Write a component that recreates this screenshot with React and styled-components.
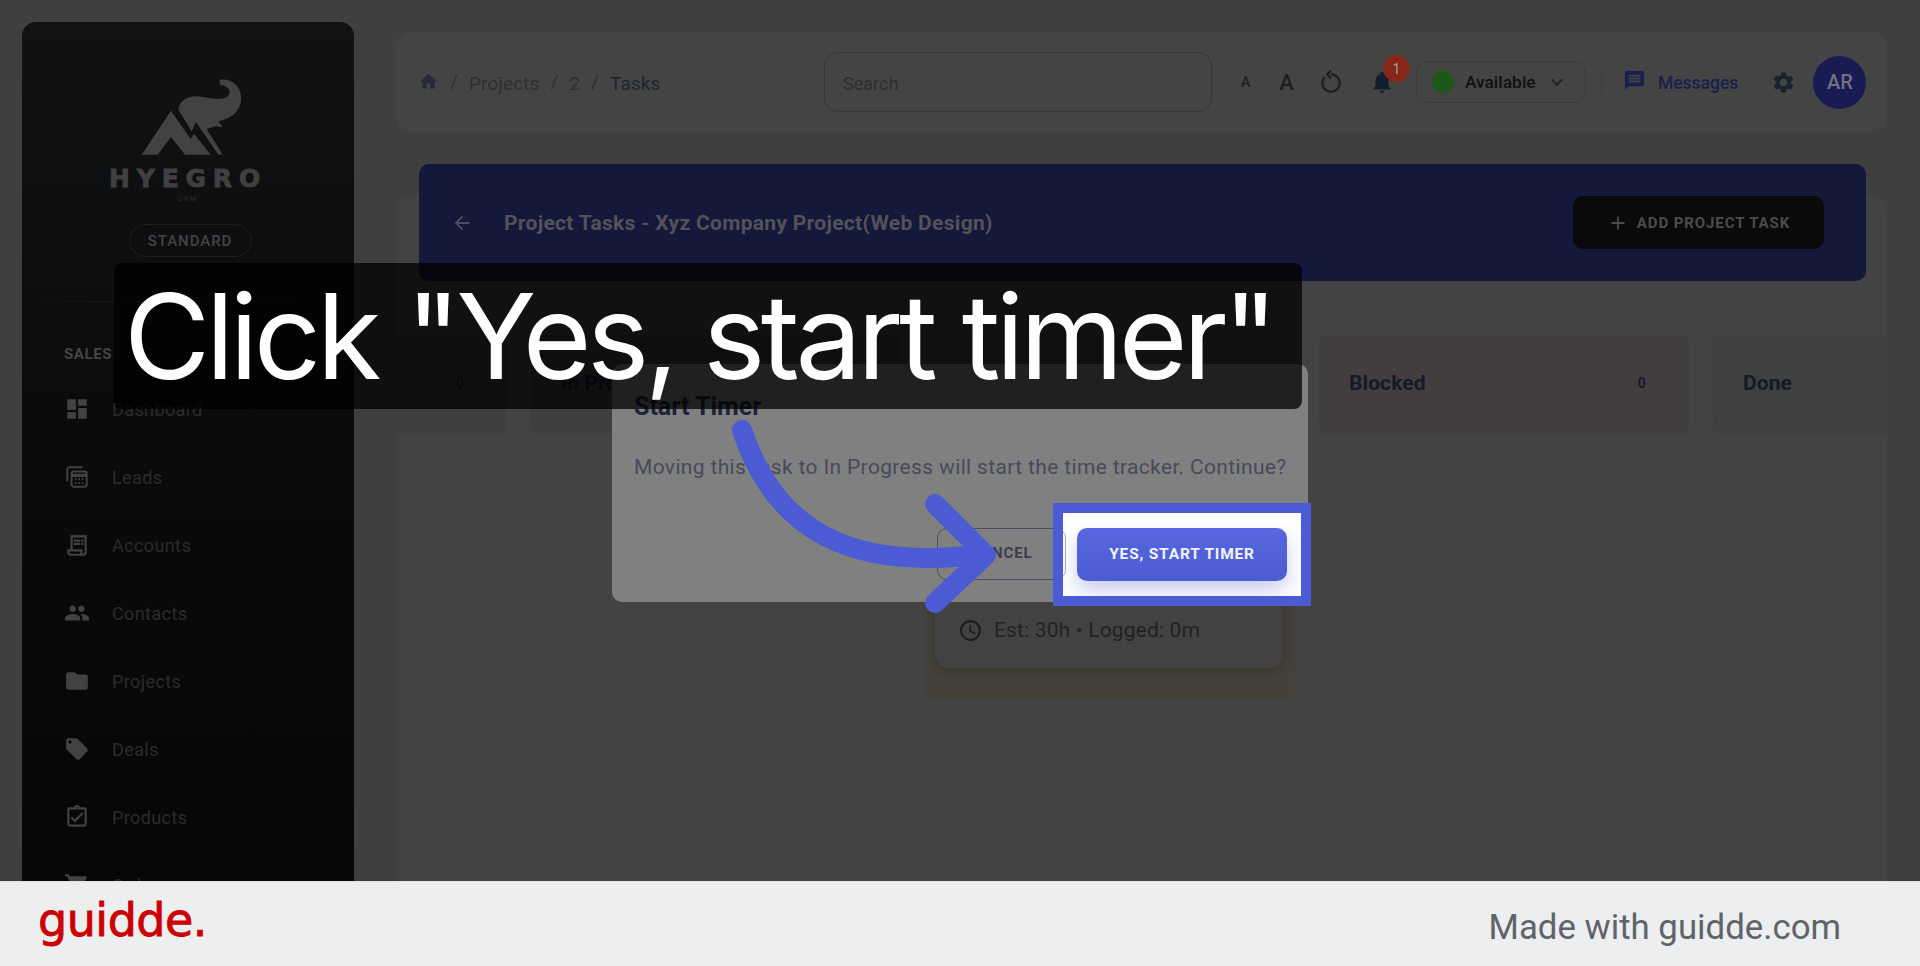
import styled, { createGlobalStyle } from 'styled-components';
import {
    MdAdd, MdAccessTime, MdArrowBack, MdDashboard, MdFolder, MdHome, MdKeyboardArrowDown,
    MdLocalOffer, MdMessage, MdNotifications, MdOutlineAssignmentTurnedIn,
    MdOutlineReceiptLong, MdPeople, MdSettings, MdShoppingCart,
} from 'react-icons/md';

const GlobalStyle = createGlobalStyle`
    html, body { margin: 0; padding: 0; height: 100%; overflow: hidden; background: #3f3f3f; }
    * { box-sizing: border-box; }
    body { font-family: Roboto, "Liberation Sans", sans-serif; }
`;

const Stage = styled.div`
    position: relative;
    height: 881px;
    overflow: hidden;
    display: flex;
    align-items: flex-start;
    padding: 22px 0 0 22px;
    background: #3f3f3f;
`;

/* sidebar */
const Sidebar = styled.aside`
    flex: none;
    width: 332px;
    height: 900px;
    border-radius: 14px;
    background: linear-gradient(180deg, #111214 0%, #0a0a0b 50%, #060606 100%);
    display: flex;
    flex-direction: column;
    align-items: center;
    padding-top: 56px;
`;

const LogoMark = styled.svg`
    width: 104px;
    height: 79px;
    margin-left: 7px;
    fill: #424242;
`;

const LogoName = styled.div`
    margin-top: 7px;
    font: 700 25px/29px "DejaVu Sans", sans-serif;
    letter-spacing: 6.8px;
    color: #404040;
    -webkit-text-stroke: 0.8px #404040;
`;

const LogoSub = styled.div`
    margin-top: 2px;
    font-size: 7px;
    line-height: 9px;
    letter-spacing: 2px;
    color: #2c2c2c;
`;

const PlanPill = styled.div`
    margin: 20px 0 0 4px;
    width: 123px;
    height: 33px;
    border: 1px solid #1f1f20;
    border-radius: 17px;
    display: flex;
    align-items: center;
    justify-content: center;
    font-size: 15px;
    font-weight: 500;
    letter-spacing: 0.95px;
    color: #444;
`;

const SideDivider = styled.div`
    margin-top: 44px;
    width: 100%;
    height: 1px;
    background: linear-gradient(90deg, transparent, #222 50%, transparent);
`;

const SectionLabel = styled.div`
    align-self: flex-start;
    margin: 42px 0 11px 42px;
    font-size: 15px;
    font-weight: 700;
    line-height: 20px;
    letter-spacing: 0.6px;
    color: #444;
`;

const NavList = styled.nav`
    align-self: stretch;
    display: flex;
    flex-direction: column;
`;

const NavRow = styled.div`
    height: 68px;
    padding-left: 42px;
    display: flex;
    align-items: center;
    gap: 22px;
    font-size: 18px;
    letter-spacing: 0.4px;
    color: #2b2b2b;
    & > svg { flex: none; width: 26px; height: 26px; color: #424242; }
`;

/* main column */
const Main = styled.main`
    flex: none;
    width: 1491px;
    margin: 10px 0 0 42px;
`;

const TopBar = styled.header`
    height: 100px;
    border-radius: 14px;
    background: #444;
    display: flex;
    align-items: center;
    padding-left: 22px;
`;

const Crumbs = styled.div`
    width: 406px;
    padding-top: 2px;
    display: flex;
    align-items: center;
    font-size: 19px;
    letter-spacing: 0.1px;
    color: #2f2f2f;
    & > svg { width: 21px; height: 21px; color: #262a33; transform: translateY(-2px); }
`;

const Slash = styled.span`
    margin: 0 11px;
    color: #2f2f2f;
    transform: translateY(-2px);
`;

const CrumbNow = styled.span`
    color: #20242f;
`;

const SearchBox = styled.div`
    flex: none;
    width: 388px;
    height: 60px;
    border: 1px solid #363636;
    border-radius: 14px;
    padding: 2px 0 0 18px;
    display: flex;
    align-items: center;
    font-size: 18px;
    color: #2e2e2e;
`;

const FontSize = styled.span`
    flex: none;
    font-weight: 500;
    font-size: ${(p) => p.$size}px;
    color: #1e1e1e;
    margin-left: ${(p) => p.$left}px;
`;

const ReloadIcon = styled.svg`
    flex: none;
    width: 26px;
    height: 26px;
    margin-left: 24px;
    fill: none;
    stroke: #1f1f1f;
    stroke-width: 2;
`;

const BellWrap = styled.div`
    position: relative;
    flex: none;
    margin-left: 25px;
    width: 26px;
    height: 26px;
    & > svg { width: 26px; height: 26px; color: #161d2b; }
`;

const Badge = styled.span`
    position: absolute;
    top: -14px;
    left: 14px;
    width: 27px;
    height: 27px;
    border-radius: 50%;
    background: #852819;
    color: #b09894;
    font-size: 14px;
    display: flex;
    align-items: center;
    justify-content: center;
`;

const StatusPill = styled.div`
    flex: none;
    margin: 0 0 0 21px;
    width: 170px;
    height: 42px;
    border: 1px solid #3a3a3a;
    border-radius: 12px;
    display: flex;
    align-items: center;
    padding-left: 15px;
    font-size: 17.4px;
    font-weight: 500;
    color: #101010;
    & > svg { margin-left: 9px; width: 24px; height: 24px; color: #222; }
`;

const StatusDot = styled.span`
    width: 22px;
    height: 22px;
    border-radius: 50%;
    background: #1a5a16;
    margin-right: 11px;
`;

const VRule = styled.span`
    flex: none;
    width: 1px;
    height: 24px;
    margin: 0 0 0 15px;
    background: #3c3c3c;
`;

const MessagesLink = styled.div`
    flex: none;
    margin-left: 21px;
    padding-top: 2px;
    display: flex;
    align-items: center;
    gap: 12px;
    font-size: 17.5px;
    font-weight: 500;
    color: #1b1f4c;
    & > svg { width: 23px; height: 23px; color: #1b1f4c; transform: translateY(-3px); }
`;

const GearIcon = styled(MdSettings)`
    flex: none;
    margin-left: 33px;
    width: 25px;
    height: 25px;
    color: #1a222f;
`;

const Avatar = styled.div`
    flex: none;
    margin: 0 0 0 17px;
    width: 53px;
    height: 53px;
    border-radius: 50%;
    background: #181c52;
    color: #717285;
    font-size: 20px;
    font-weight: 500;
    display: flex;
    align-items: center;
    justify-content: center;
`;

const BoardCard = styled.section`
    margin-top: 64px;
    height: 720px;
    border-radius: 14px;
    background: #434343;
`;

const PageHead = styled.div`
    position: relative;
    top: -32px;
    height: 117px;
    margin: 0 21px 0 23px;
    border-radius: 10px;
    background: #14183a;
    display: flex;
    align-items: center;
    padding: 0 42px 0 32px;
    & > svg { width: 22px; height: 22px; color: #4c4d61; }
`;

const PageTitle = styled.h1`
    flex: 1;
    margin: 0 0 0 31px;
    font-size: 21px;
    letter-spacing: 0.3px;
    font-weight: 700;
    color: #525258;
`;

const AddButton = styled.div`
    width: 251px;
    height: 53px;
    border-radius: 10px;
    background: #0a0a0b;
    display: flex;
    align-items: center;
    justify-content: center;
    gap: 8px;
    font-size: 15px;
    font-weight: 700;
    letter-spacing: 0.9px;
    color: #4b4b4b;
    & > svg { width: 22px; height: 22px; }
`;

const Columns = styled.div`
    height: 600px;
    margin-top: 22px;
    overflow: hidden;
    display: flex;
    align-items: flex-start;
    gap: 24px;
    & > :first-child { margin-left: -259px; }
`;

const Column = styled.div`
    flex: none;
    width: 370px;
    border-radius: 6px;
    background: ${(p) => p.$tint};
`;

const ColumnHead = styled.div`
    height: 88px;
    padding: 8px 33px 0 30px;
    border-bottom: 1px solid #3c3c3a;
    margin: 0 10px 11px 0;
    display: flex;
    align-items: center;
    justify-content: space-between;
    font-size: 21px;
    letter-spacing: 0.1px;
    font-weight: 700;
    color: #141a2a;
`;

const Count = styled.span`
    font-size: 14px;
    font-weight: 700;
`;

const TaskCard = styled.div`
    height: 234px;
    margin: 0 12px 32px 10px;
    border-radius: 14px;
    background: #424242;
    box-shadow: 0 3px 8px rgba(0, 0, 0, 0.18);
    display: flex;
    align-items: flex-end;
    gap: 11px;
    padding: 0 0 24px 23px;
    font-size: 21px;
    letter-spacing: 0.15px;
    line-height: 28px;
    color: #222;
    & > svg { width: 25px; height: 25px; margin-bottom: 1px; color: #1c1c1c; }
`;

/* modal and the guide overlay on top of the page */
const Dialog = styled.div`
    position: absolute;
    left: 612px;
    top: 364px;
    width: 696px;
    height: 238px;
    border-radius: 10px;
    background: #808080;
    padding: 28px 22px 22px;
    display: flex;
    flex-direction: column;
`;

const DialogTitle = styled.h2`
    margin: 0;
    font-size: 25px;
    line-height: 30px;
    font-weight: 700;
    color: #1f2438;
`;

const DialogBody = styled.p`
    margin: 30px 0 0;
    font-size: 21px;
    letter-spacing: 0.35px;
    line-height: 30px;
    white-space: nowrap;
    color: #484a5a;
`;

const DialogActions = styled.div`
    margin-top: auto;
    padding-right: 220px;
    display: flex;
    justify-content: flex-end;
`;

const CancelButton = styled.div`
    width: 129px;
    height: 52px;
    padding-bottom: 2px;
    border: 1px solid #4c4e62;
    border-radius: 10px;
    display: flex;
    align-items: center;
    justify-content: center;
    font-size: 15px;
    font-weight: 700;
    letter-spacing: 0.9px;
    color: #3b3d4e;
`;

const Arrow = styled.svg`
    position: absolute;
    left: 0;
    top: 0;
    width: 1920px;
    height: 881px;
    pointer-events: none;
`;

const Highlight = styled.div`
    position: absolute;
    left: 1053px;
    top: 503px;
    width: 258px;
    height: 103px;
    border: 10px solid #4a5bd4;
    background: #fff;
    overflow: hidden;
    display: flex;
    align-items: center;
    justify-content: center;
`;

const CancelEdge = styled.span`
    position: absolute;
    left: -126px;
    top: 15px;
    width: 129px;
    height: 52px;
    border: 1px solid #a9aab5;
    border-radius: 10px;
`;

const ConfirmButton = styled.div`
    width: 210px;
    height: 53px;
    padding-bottom: 2px;
    border-radius: 10px;
    background: linear-gradient(180deg, #5667df, #4c5cd2);
    box-shadow: 0 10px 20px rgba(76, 92, 210, 0.3);
    display: flex;
    align-items: center;
    justify-content: center;
    font-size: 15.5px;
    font-weight: 700;
    letter-spacing: 0.8px;
    color: #f1f2fb;
`;

const Caption = styled.div`
    position: absolute;
    left: 114px;
    top: 263px;
    width: 1188px;
    height: 146px;
    border-radius: 8px;
    background: rgba(0, 0, 0, 0.75);
    padding-left: 10px;
    display: flex;
    align-items: center;
    font-family: Inter, sans-serif;
    font-size: 118px;
    letter-spacing: -4.5px;
    white-space: nowrap;
    color: #fff;
`;

const Footer = styled.footer`
    height: 85px;
    border-top: 1px solid #dfe1e3;
    background: #eceef0;
    display: flex;
    align-items: center;
    justify-content: space-between;
    padding: 0 79px 0 38px;
`;

const GuiddeLogo = styled.div`
    font-family: "DejaVu Sans", sans-serif;
    font-size: 46px;
    line-height: 60px;
    letter-spacing: -0.5px;
    color: #cc0000;
    -webkit-text-stroke: 0.9px #cc0000;
    transform: translateY(-4px);
`;

const MadeWith = styled.div`
    font-size: 34.8px;
    padding-top: 6px;
    color: #606368;
`;

const LeadsIcon = () => (
    <svg viewBox="0 0 24 24" fill="none" stroke="currentColor" strokeWidth="1.8">
        <path d="M3 16V5a2 2 0 0 1 2-2h12" />
        <rect x="7" y="7" width="14" height="14" rx="2" />
        <path d="M7 10.5h14" strokeWidth="3" />
        <path d="M10 14h1.5M13.2 14h1.5M16.4 14h1.5M10 17.5h1.5M13.2 17.5h1.5M16.4 17.5h1.5" strokeWidth="2" />
    </svg>
);

const NAV = [
    ['Dashboard', MdDashboard],
    ['Leads', LeadsIcon],
    ['Accounts', MdOutlineReceiptLong],
    ['Contacts', MdPeople],
    ['Projects', MdFolder],
    ['Deals', MdLocalOffer],
    ['Products', MdOutlineAssignmentTurnedIn],
    ['Orders', MdShoppingCart],
];

const App = () => (
    <>
        <GlobalStyle />
        <Stage>
            <Sidebar>
                <LogoMark viewBox="150 55 312 237">
                    <path d="M155 285 L243 153 L302 238 L312 222 L362 285 L285 285 L243 232 L203 285 Z" />
                    <path d="M265 150 C270 115 305 105 340 112 C370 118 400 122 415 108 C425 95 415 78 390 75 L388 60 C430 55 458 85 453 125 C448 160 420 178 385 185 L398 203 L375 200 L350 208 L398 285 L385 285 L318 188 L305 215 Z" />
                </LogoMark>
                <LogoName>HYEGRO</LogoName>
                <LogoSub>CRM</LogoSub>
                <PlanPill>STANDARD</PlanPill>
                <SideDivider />
                <SectionLabel>SALES</SectionLabel>
                <NavList>
                    {NAV.map(([label, Icon]) => (
                        <NavRow key={label}>
                            <Icon />
                            {label}
                        </NavRow>
                    ))}
                </NavList>
            </Sidebar>

            <Main>
                <TopBar>
                    <Crumbs>
                        <MdHome />
                        <Slash>/</Slash>
                        Projects
                        <Slash>/</Slash>
                        2
                        <Slash>/</Slash>
                        <CrumbNow>Tasks</CrumbNow>
                    </Crumbs>
                    <SearchBox>Search</SearchBox>
                    <FontSize $size={14} $left={29}>A</FontSize>
                    <FontSize $size={22} $left={29}>A</FontSize>
                    <ReloadIcon viewBox="0 0 24 24">
                        <path d="M12 5a8 8 0 1 1-5.7 2.4" />
                        <path d="M12 1.5 8.5 5 12 8.5" />
                    </ReloadIcon>
                    <BellWrap>
                        <MdNotifications />
                        <Badge>1</Badge>
                    </BellWrap>
                    <StatusPill>
                        <StatusDot />
                        Available
                        <MdKeyboardArrowDown />
                    </StatusPill>
                    <VRule />
                    <MessagesLink>
                        <MdMessage />
                        Messages
                    </MessagesLink>
                    <GearIcon />
                    <Avatar>AR</Avatar>
                </TopBar>

                <BoardCard>
                    <PageHead>
                        <MdArrowBack />
                        <PageTitle>Project Tasks - Xyz Company Project(Web Design)</PageTitle>
                        <AddButton>
                            <MdAdd />
                            ADD PROJECT TASK
                        </AddButton>
                    </PageHead>
                    <Columns>
                        <Column $tint="#3e3f41">
                            <ColumnHead>To Do<Count>0</Count></ColumnHead>
                        </Column>
                        <Column $tint="#3e3f41">
                            <ColumnHead>In Progress<Count>0</Count></ColumnHead>
                        </Column>
                        <Column $tint="#44413b">
                            <ColumnHead>Review<Count>1</Count></ColumnHead>
                            <TaskCard>
                                <MdAccessTime />
                                Est: 30h • Logged: 0m
                            </TaskCard>
                        </Column>
                        <Column $tint="#423e3e">
                            <ColumnHead>Blocked<Count>0</Count></ColumnHead>
                        </Column>
                        <Column $tint="#3e4140">
                            <ColumnHead>Done<Count>0</Count></ColumnHead>
                        </Column>
                    </Columns>
                </BoardCard>
            </Main>

            <Dialog>
                <DialogTitle>Start Timer</DialogTitle>
                <DialogBody>Moving this task to In Progress will start the time tracker. Continue?</DialogBody>
                <DialogActions>
                    <CancelButton>CANCEL</CancelButton>
                </DialogActions>
            </Dialog>

            <Highlight>
                <CancelEdge />
                <ConfirmButton>YES, START TIMER</ConfirmButton>
            </Highlight>

            <Arrow viewBox="0 0 1920 881" fill="none" stroke="#4a5bd4" strokeWidth="20" strokeLinecap="round" strokeLinejoin="round">
                <path d="M742 430 C775 530 850 572 984 554" />
                <path d="M935 504 L986 555 L935 603" />
            </Arrow>

            <Caption>Click "Yes, start timer"</Caption>
        </Stage>

        <Footer>
            <GuiddeLogo>guidde.</GuiddeLogo>
            <MadeWith>Made with guidde.com</MadeWith>
        </Footer>
    </>
);

export default App;
